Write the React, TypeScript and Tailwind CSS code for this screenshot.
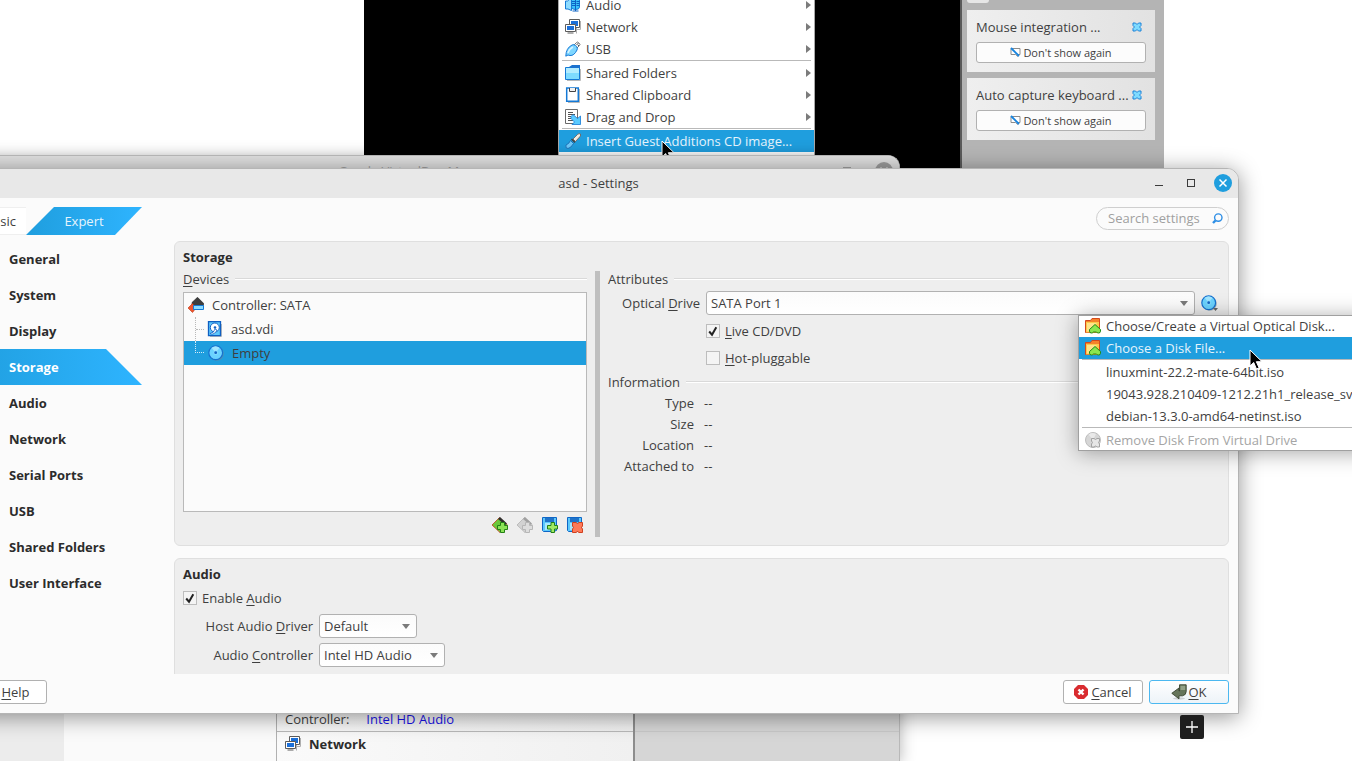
import type { ReactNode } from "react";
import { clsx } from "clsx";

const NAV_ITEMS = ["General", "System", "Display", "Storage", "Audio", "Network", "Serial Ports", "USB", "Shared Folders", "User Interface"];

const INFO_ROWS = ["Type", "Size", "Location", "Attached to"];

const NOTIFICATIONS = ["Mouse integration ...", "Auto capture keyboard ..."];

type IconProps = { children: ReactNode; className?: string };

function Icon({ children, className }: IconProps) {
    return (
        <svg viewBox="0 0 16 16" className={clsx("size-4 shrink-0", className)} aria-hidden="true">
            {children}
        </svg>
    );
}

function AudioIcon() {
    return (
        <Icon>
            <path d="M.5 4h2l4-3.500v13L3 12H.5z" fill="#8fdcff" stroke="#1479d6" />
            <path d="M6.500 3q0-2.500 4-2.500t4 2.500v7q0 2.500-4 2.500t-4-2.500z" fill="#3cc4fa" stroke="#1479d6" />
            <path d="M7 4.500h3M7 6.500h3M7 8.500h3M11.500 4.500h3M11.500 6.500h3M11.500 8.500h3M10.500 1v13M7.500 14h6" stroke="#0b62c4" fill="none" />
        </Icon>
    );
}

function NetworkIcon() {
    return (
        <Icon>
            <path d="M15.500 2v8.500H12M11.500 8v6.500" stroke="#b0b0b0" fill="none" />
            <path d="M4.500.500h10v8h-10z" fill="#fff" stroke="#5c5c5c" />
            <path d="M6 2h7v5H6z" fill="#1b6fd8" />
            <path d="M.500 5.500h10v7H.500z" fill="#fff" stroke="#5c5c5c" />
            <path d="M2 7h7v4H2z" fill="#1b6fd8" />
            <path d="M2.500 14h6" stroke="#5c5c5c" />
        </Icon>
    );
}

function UsbIcon() {
    return (
        <Icon>
            <path d="M9 4l2.500-2.500q1-1 2 0l1 1q1 1 0 2L12 7z" fill="#f4f4f4" stroke="#777" />
            <path d="M11.500 3.500h1M12.500 2.500h1M13 4.500h1" stroke="#555" />
            <path d="M.8 15.200Q1 7 7 4q2-1 3.500.5l1 1Q13 7 12 9q-3 6-7 5.500l-2-.5z" fill="#7ed6ff" stroke="#1479d6" />
            <path d="M3 12q1-4 5-6" stroke="#d5f3ff" fill="none" strokeWidth="1.500" />
        </Icon>
    );
}

function FolderIcon() {
    return (
        <Icon>
            <path d="M4 2l3-2h8v4H4z" fill="#1b72cf" />
            <path d="M15.500 4v11.500H2" stroke="#b9b9b9" fill="none" />
            <path d="M.500 2.500h14v12H.500z" fill="#7edbff" stroke="#1479d6" />
            <path d="M1 3h13v5H1z" fill="#b2ecff" />
            <path d="M8 0h7v3H6z" fill="#1b72cf" />
        </Icon>
    );
}

function ClipboardIcon() {
    return (
        <Icon>
            <path d="M14.500 2v13.500H3" stroke="#b9b9b9" fill="none" />
            <path d="M1.700 1h11.600v13.300H1.700z" fill="#fff" stroke="#1479d6" strokeWidth="1.500" />
            <path d="M4.500 1v3.500h6V1" fill="#f2f2f2" stroke="#444" />
        </Icon>
    );
}

function DragDropIcon() {
    return (
        <Icon>
            <path d="M.500.500h12v14H.500z" fill="#fff" stroke="#6a6a6a" />
            <path d="M3 3.500h5M3 5.500h7M3 7.500h3M3 9.500h3M3 11.500h5" stroke="#555" />
            <path d="M6 7.500l2-2 4.500 4 3-2.500v8.500H7l2.500-2.500L6 9.500z" fill="#5acbff" stroke="#1479d6" strokeWidth=".8" />
        </Icon>
    );
}

function ScrewdriverIcon() {
    return (
        <Icon>
            <path d="M8 6l4.500-4.500Q14 0 15.500 1v2L10.500 8.500z" fill="#f3ebe2" stroke="#6b5a52" strokeWidth=".8" />
            <path d="M6.500 6l3.500 3.500" stroke="#444" strokeWidth="1.500" />
            <path d="M1 12q3-1 4.500-4.500l3 3Q6 15 3 15.500q-3 0-2-3.500z" fill="#6ec9fa" stroke="#1464ad" strokeWidth=".8" />
        </Icon>
    );
}

function DiskFolderIcon() {
    return (
        <Icon>
            <path d="M.500 2.500h5l1.500-2h7.500v14H.500z" fill="#f5822a" stroke="#d4491c" />
            <path d="M1 4h13v10.500H1z" fill="#fbc94a" />
            <path d="M2 5h10L4 13.500H2z" fill="#ffe38a" />
            <path d="M10 6.500l5.500 5v1.700q0 1.800-2 1.800-1.500 0-2-1h-3q-.8 1-2 1-2 0-2-1.800v-1.700z" fill="#8be64f" stroke="#1f8a17" />
        </Icon>
    );
}

function RemoveDiskIcon() {
    return (
        <Icon>
            <circle cx="8" cy="8" r="7.500" fill="#d6d6d6" stroke="#bdbdbd" />
            <path d="M8 8L3.500 2.500Q7 0 11 2z" fill="#e9e9e9" />
            <path d="M6.500 6.500H9l1.500 1 1.500-1h2.500v2.500l-1 1.500 1 1.500V15H12l-1.500-1L9 15H6.500v-3l1-1.500-1-1.500z" fill="#e6e6e6" stroke="#a3a3a3" />
        </Icon>
    );
}

function ControllerIcon() {
    return (
        <Icon>
            <path d="M4 5.500L9.500.3l6 6v2.200H4z" fill="#3d3d3d" stroke="#222" strokeWidth=".6" />
            <path d="M0 11l4.500-4.500L8 11l-3.500 4.500z" fill="#f0542c" stroke="#b8320f" strokeWidth=".6" />
            <path d="M5.500 8.500h10v4h-10z" fill="#8ddcff" stroke="#1479d6" />
        </Icon>
    );
}

function HardDiskIcon() {
    return (
        <Icon>
            <path d="M14.500 3v12.500H3" stroke="#bdbdbd" fill="none" />
            <path d="M1.500.700h12v14h-12z" fill="#5cc6fb" stroke="#0f5fc2" strokeWidth="1.300" />
            <circle cx="7.800" cy="6.500" r="4.500" fill="#fff" stroke="#1262c6" />
            <path d="M8 8q-1 4-5 4.500 1 1 3 .5 3-1 4-4z" fill="#fff" stroke="#1262c6" strokeWidth=".8" />
            <circle cx="8" cy="6.500" r="1.300" fill="#1262c6" />
        </Icon>
    );
}

function DiscIcon() {
    return (
        <Icon>
            <circle cx="8.800" cy="8.800" r="7" fill="#6e8797" opacity=".6" />
            <circle cx="7.700" cy="7.700" r="6.900" fill="#6bd3ff" stroke="#1671cf" strokeWidth="1.200" />
            <path d="M7.700 7.700L3.500 2.800q4-3 8 0z" fill="#a3e6ff" />
            <circle cx="7.700" cy="7.700" r="2.300" fill="#86dcff" />
            <circle cx="7.700" cy="7.700" r="1.400" fill="#1564c4" />
        </Icon>
    );
}

function AddControllerIcon({ disabled }: { disabled?: boolean }) {
    return (
        <Icon className={clsx(disabled && "opacity-40 grayscale")}>
            <path d="M0 8l7.500-7.500L15.500 8 8 15.500z" fill="#6cc83a" stroke="#c7401c" strokeWidth=".8" />
            <path d="M6 2l2-2 7 6.500-2 1.500z" fill="#2e2e2e" />
            <path d="M8.500 5.500h4v3h3v4h-3v3h-4v-3h-3v-4h3z" fill="#8be356" stroke="#238016" />
        </Icon>
    );
}

function AttachmentIcon({ kind }: { kind: "add" | "remove" }) {
    return (
        <Icon>
            <path d="M.500.500h14v13h-1l-.5 1H1.500l-1-1z" fill="#5cc8fb" stroke="#0f66c6" />
            <path d="M3 1h9v4H3z" fill="#2073c9" />
            <path d="M3 6h9v7H3z" fill="#a9e8ff" />
            {kind === "add" ? (
                <path d="M9 5.500h3.500v3h3v3.500h-3v3.500H9V12H5.500V8.500H9z" fill="#a0ea62" stroke="#238016" />
            ) : (
                <path d="M5.500 5.500H9l1.500 1 1.500-1h3.500V9l-1 1.500 1 1.500v3.500H12l-1.500-1-1.500 1H5.500V12l1-1.500-1-1.500z" fill="#ff7a58" stroke="#d0401f" />
            )}
        </Icon>
    );
}

function Cursor({ className }: { className: string }) {
    return (
        <svg viewBox="0 0 14 21" className={clsx("pointer-events-none absolute h-[21px] w-[14px]", className)} aria-hidden="true">
            <path d="M1 1v16l3.700-3.500L7.500 20l2.600-1.200-2.800-6.100H13z" fill="#000" stroke="#fff" />
        </svg>
    );
}

type MenuItemProps = { icon?: ReactNode; label: string; submenu?: boolean; active?: boolean; disabled?: boolean };

function MenuItem({ icon, label, submenu, active, disabled }: MenuItemProps) {
    return (
        <li>
            <button
                type="button"
                disabled={disabled}
                className={clsx(
                    "flex h-[22px] w-full items-center gap-[5px] pr-1 pl-[7px] text-left whitespace-nowrap",
                    active && "bg-[#1f9ede] text-[#e6f4fc]",
                    disabled && "text-[#a5a5a5]"
                )}
            >
                <span className="size-4 shrink-0">{icon}</span>
                <span className="flex-1">{label}</span>
                {submenu && (
                    <svg viewBox="0 0 5 8" className="h-2 w-[5px]" aria-hidden="true">
                        <path d="M0 0l5 4-5 4z" fill="#7b7b7b" />
                    </svg>
                )}
            </button>
        </li>
    );
}

function MenuSeparator() {
    return <li role="separator" className="mx-1 h-0.5 border-t border-[#b9b9b9]" />;
}

function Caret() {
    return (
        <svg viewBox="0 0 8 5" className="pointer-events-none mr-[7px] h-[5px] w-2 self-center justify-self-end [grid-area:1/1]" aria-hidden="true">
            <path d="M0 0h8L4 5z" fill="#7b7b7b" />
        </svg>
    );
}

function Dropdown({ id, value, className }: { id: string; value: string; className?: string }) {
    return (
        <div className={clsx("grid", className)}>
            <select
                id={id}
                className="h-6 w-full appearance-none rounded-[3px] border border-[#b1b1b1] bg-linear-to-b from-[#fbfbfb] to-white pr-5 pl-1 [grid-area:1/1]"
            >
                <option>{value}</option>
            </select>
            <Caret />
        </div>
    );
}

function Checkbox({ children, checked }: { children: ReactNode; checked?: boolean }) {
    return (
        <label className="flex items-center gap-[5px]">
            <span className="grid">
                <input type="checkbox" defaultChecked={checked} className="peer size-3.5 appearance-none border border-[#bdbdbd] bg-[#f4f4f4] [grid-area:1/1]" />
                <svg viewBox="0 0 14 14" className="pointer-events-none hidden size-3.5 [grid-area:1/1] peer-checked:block" aria-hidden="true">
                    <path d="M3.200 7.500l2.800 3.200 4.300-7.500" fill="none" stroke="#222" strokeWidth="2" />
                </svg>
            </span>
            <span>{children}</span>
        </label>
    );
}

function Mnemonic({ children }: { children: string }) {
    return <span className="underline underline-offset-2">{children}</span>;
}

function GroupTitle({ children }: { children: ReactNode }) {
    return (
        <div className="flex h-4 items-center gap-1.5">
            <h3>{children}</h3>
            <div className="h-0.5 flex-1 border-t border-b border-t-[#d9d9d9] border-b-white" />
        </div>
    );
}

function DeviceMenu() {
    return (
        <ul className="absolute -top-1.5 left-[194px] h-[170px] w-[257px] bg-white outline-1 -outline-offset-1 outline-[#a9a9a9]">
            <MenuItem icon={<AudioIcon />} label="Audio" submenu />
            <MenuItem icon={<NetworkIcon />} label="Network" submenu />
            <MenuItem icon={<UsbIcon />} label="USB" submenu />
            <MenuSeparator />
            <MenuItem icon={<FolderIcon />} label="Shared Folders" submenu />
            <MenuItem icon={<ClipboardIcon />} label="Shared Clipboard" submenu />
            <MenuItem icon={<DragDropIcon />} label="Drag and Drop" submenu />
            <MenuSeparator />
            <MenuItem icon={<ScrewdriverIcon />} label="Insert Guest Additions CD image..." active />
        </ul>
    );
}

function Notification({ title }: { title: string }) {
    return (
        <li className="flex h-[62px] flex-col gap-[5px] bg-linear-to-r from-[#efefef] to-[#e2e2e2] px-[9px] pt-[7px]">
            <div className="flex h-5 items-center justify-between pr-1">
                <span>{title}</span>
                <button type="button" aria-label="Close">
                    <svg viewBox="0 0 10 10" className="size-2.5" aria-hidden="true">
                        <path d="M1 1h2.500L5 2.500 6.500 1H9v2.500L7.500 5 9 6.500V9H6.500L5 7.500 3.500 9H1V6.500L2.500 5 1 3.500z" fill="#7edbff" stroke="#1d82d8" />
                    </svg>
                </button>
            </div>
            <button type="button" className="flex h-[21px] items-center justify-center gap-0.5 rounded-[3px] border border-[#b1b1b1] bg-[#fcfcfc] text-[11px]">
                <svg viewBox="0 0 11 11" className="size-[11px]" aria-hidden="true">
                    <path d="M1 1.500h9v6H8v2L5.500 7.500H1z" fill="#fff" stroke="#8b8b8b" />
                    <path d="M1 1l8 8" stroke="#1684e0" strokeWidth="1.800" />
                </svg>
                Don't show again
            </button>
        </li>
    );
}

function MachineWindow() {
    return (
        <section aria-label="Virtual machine" className="absolute top-0 right-[188px] left-[364px] flex h-[400px] bg-black">
            <div className="flex-1" />
            <aside className="w-[204px] border-l-2 border-[#5a5a5a] bg-[#b4b4b4] pr-[9px] pl-[5px]">
                <div className="mb-[7px] h-[3px] w-[22px] rounded-b-sm bg-[#e6e6e6]" />
                <ul className="flex flex-col gap-1.5">
                    {NOTIFICATIONS.map((title) => (
                        <Notification key={title} title={title} />
                    ))}
                </ul>
            </aside>
            <DeviceMenu />
            <Cursor className="top-[140px] left-[297px]" />
        </section>
    );
}

function ManagerWindow() {
    return (
        <section
            aria-label="Manager"
            className="absolute top-[155px] right-[452px] bottom-0 -left-[70px] flex flex-col overflow-hidden rounded-t-xl border border-b-0 border-[#b9b9b9] bg-[#fafafa] shadow-[0_2px_16px_rgba(0,0,0,0.3)]"
        >
            <header className="flex h-[30px] items-center bg-[#dedede] px-1.5 text-[#a0a0a0]">
                <h2 className="flex-1 pl-[60px] text-center">Oracle VirtualBox Manager</h2>
                <div className="flex w-[50px] items-center justify-between">
                    <span className="size-2 border border-current" />
                    <svg viewBox="0 0 18 18" className="size-[18px]" aria-hidden="true">
                        <circle cx="9" cy="9" r="9" fill="#9b9b9b" />
                        <path d="M5.500 5.500l7 7M12.500 5.500l-7 7" stroke="#dedede" strokeWidth="1.500" />
                    </svg>
                </div>
            </header>
            <div className="flex flex-1">
                <div className="w-[133px] bg-[#ececec]" />
                <div className="w-[212px]" />
                <div className="flex w-[359px] flex-col justify-end border-r-2 border-l border-r-[#8d8d8d] border-l-[#b1b1b1] bg-linear-to-r from-[#fafafa] to-[#f0f0f0]">
                    <div className="flex h-[26px] items-center gap-[17px] border-b border-[#b9b9b9] pl-2">
                        <span>Controller:</span>
                        <a href="#audio" className="text-[#1a12e8]">Intel HD Audio</a>
                    </div>
                    <div className="flex h-[29px] items-start gap-2 pt-1 pl-2">
                        <NetworkIcon />
                        <h3 className="leading-4 font-bold text-[#2c2c2c]">Network</h3>
                    </div>
                </div>
                <div className="flex flex-1 flex-col justify-end bg-[#d6d6d6]">
                    <div className="h-[30px] border-t border-[#c9c9c9]" />
                </div>
            </div>
        </section>
    );
}

function TitleBar() {
    return (
        <header className="flex h-[29px] shrink-0 items-center bg-[#e8e8e8] pr-1.5 pb-px">
            <h1 className="flex-1 pl-[84px] text-center">asd - Settings</h1>
            <div className="flex items-center gap-[19px] text-[#3b3b3b]">
                <button type="button" aria-label="Minimize" className="flex h-1.5 w-[13px] items-end">
                    <span className="h-px w-2 bg-current" />
                </button>
                <button type="button" aria-label="Maximize" className="size-2 border border-current" />
                <button type="button" aria-label="Close">
                    <svg viewBox="0 0 18 18" className="size-[18px]" aria-hidden="true">
                        <circle cx="9" cy="9" r="9" fill="#1f9ede" />
                        <path d="M5.500 5.500l7 7M12.500 5.500l-7 7" stroke="#fff" strokeWidth="1.500" />
                    </svg>
                </button>
            </div>
        </header>
    );
}

function ModeBar() {
    return (
        <div className="flex h-7 shrink-0 items-start justify-between">
            <div className="flex h-7 items-center">
                <button type="button" className="h-7 w-[68px] border-y border-[#efefef] bg-white pr-[10px] text-right">Basic</button>
                <button
                    type="button"
                    className="h-7 w-[116px] bg-linear-to-r from-[#1f9ede] to-[#2eb4ff] text-[#e6f4fc] [clip-path:polygon(28px_0,100%_0,89px_100%,0_100%)]"
                >
                    Expert
                </button>
            </div>
            <label className="flex h-[23px] w-[133px] items-center rounded-full border border-[#cfcfcf] pr-[5px] pl-[11px]">
                <input type="text" placeholder="Search settings" aria-label="Search settings" className="h-5 min-w-0 flex-1 bg-transparent pb-px outline-none placeholder:text-[#a0a0a0]" />
                <svg viewBox="0 0 11 11" className="size-[11px]" aria-hidden="true">
                    <circle cx="6.300" cy="4.600" r="3.700" fill="none" stroke="#2f8fe6" strokeWidth="1.400" />
                    <path d="M3.500 7.500L1 10" stroke="#2f8fe6" strokeWidth="2.400" />
                </svg>
            </label>
        </div>
    );
}

function CategoryNav() {
    return (
        <nav className="w-[184px] shrink-0">
            <ul className="font-bold text-[#2c2c2c]">
                {NAV_ITEMS.map((item) => (
                    <li key={item}>
                        <a
                            href="#settings"
                            className={clsx(
                                "flex h-9 items-center pl-[51px]",
                                item === "Storage" &&
                                    "bg-linear-to-r from-[#1f9ede] to-[#2eb4ff] text-white [clip-path:polygon(0_0,148px_0,100%_100%,0_100%)]"
                            )}
                        >
                            {item}
                        </a>
                    </li>
                ))}
            </ul>
        </nav>
    );
}

function StorageTree() {
    return (
        <div className="flex w-[404px] shrink-0 flex-col">
            <GroupTitle>
                <Mnemonic>D</Mnemonic>evices
            </GroupTitle>
            <ul className="mt-[5px] h-[220px] border border-[#b9b9b9] bg-[#fbfbfb]">
                <li className="flex h-6 items-center gap-2 pl-1">
                    <ControllerIcon />
                    Controller: SATA
                </li>
                <li className="flex h-6 items-center pl-[11px]">
                    <span className="h-6 w-px border-l border-dotted border-[#b9b9b9]" />
                    <span className="mr-[3px] w-2 border-t border-dotted border-[#b9b9b9]" />
                    <HardDiskIcon />
                    <span className="ml-2">asd.vdi</span>
                </li>
                <li className="flex h-6 items-center bg-[#1f9ede] pl-[11px]">
                    <span className="h-3 w-[9px] self-start border-b border-l border-dotted border-[#d5ecf8]" />
                    <span className="w-1" />
                    <DiscIcon />
                    <span className="ml-2">Empty</span>
                </li>
            </ul>
            <div className="flex justify-end gap-[9px] pt-[5px] pr-1">
                <button type="button" aria-label="Add controller"><AddControllerIcon /></button>
                <button type="button" aria-label="Remove controller" disabled><AddControllerIcon disabled /></button>
                <button type="button" aria-label="Add attachment"><AttachmentIcon kind="add" /></button>
                <button type="button" aria-label="Remove attachment"><AttachmentIcon kind="remove" /></button>
            </div>
        </div>
    );
}

function StorageAttributes() {
    return (
        <div className="flex-1">
            <GroupTitle>Attributes</GroupTitle>
            <div className="mt-1 flex items-center">
                <label htmlFor="optical" className="mr-1.5 w-[92px] text-right">
                    Optical <Mnemonic>D</Mnemonic>rive
                </label>
                <Dropdown id="optical" value="SATA Port 1" className="flex-1" />
                <button type="button" aria-label="Choose disk" className="mr-0.5 ml-1.5 flex items-end">
                    <DiscIcon />
                    <svg viewBox="0 0 5 3" className="-ml-1 h-[3px] w-[5px]" aria-hidden="true">
                        <path d="M0 0h5L2.500 3z" fill="#666" />
                    </svg>
                </button>
            </div>
            <div className="flex flex-col gap-[7px] pt-1.5 pl-[98px]">
                <Checkbox checked>
                    <Mnemonic>L</Mnemonic>ive CD/DVD
                </Checkbox>
                <Checkbox>
                    <Mnemonic>H</Mnemonic>ot-pluggable
                </Checkbox>
            </div>
            <div className="mt-1.5">
                <GroupTitle>Information</GroupTitle>
            </div>
            <dl className="mt-0.5">
                {INFO_ROWS.map((label) => (
                    <div key={label} className="flex h-[21px] items-center">
                        <dt className="mr-2.5 w-[86px] text-right">{label}</dt>
                        <dd>--</dd>
                    </div>
                ))}
            </dl>
        </div>
    );
}

function StorageCard() {
    return (
        <section className="shrink-0 rounded-md border border-[#dfdfdf] bg-[#eee] px-2 pt-[7px] pb-2">
            <h2 className="mb-0.5 h-5 leading-4 font-bold text-[#2c2c2c]">Storage</h2>
            <div className="flex">
                <StorageTree />
                <div className="mr-2 ml-2 h-[266px] w-[5px] bg-[#bfbfbf]" />
                <StorageAttributes />
            </div>
        </section>
    );
}

function AudioCard() {
    return (
        <section className="shrink-0 rounded-md border border-[#dfdfdf] bg-[#eee] px-2 pt-[7px] pb-8">
            <h2 className="mb-1.5 h-4 leading-4 font-bold text-[#2c2c2c]">Audio</h2>
            <Checkbox checked>
                Enable <Mnemonic>A</Mnemonic>udio
            </Checkbox>
            <div className="mt-1.5 flex items-center gap-1.5">
                <label htmlFor="driver" className="w-[130px] text-right">
                    Host Audio <Mnemonic>D</Mnemonic>river
                </label>
                <Dropdown id="driver" value="Default" className="w-[98px]" />
            </div>
            <div className="mt-[5px] flex items-center gap-1.5">
                <label htmlFor="controller" className="w-[130px] text-right">
                    Audio <Mnemonic>C</Mnemonic>ontroller
                </label>
                <Dropdown id="controller" value="Intel HD Audio" className="w-[126px]" />
            </div>
        </section>
    );
}

function DialogButtons() {
    return (
        <footer className="flex shrink-0 items-center gap-1.5 pt-1.5 pr-[9px] pb-[9px]">
            <button type="button" className="mr-auto h-6 w-[89px] rounded-[3px] border border-[#b1b1b1] bg-white pl-[26px]">
                <Mnemonic>H</Mnemonic>elp
            </button>
            <button type="button" className="flex h-6 w-20 items-center justify-center gap-[3px] rounded-[3px] border border-[#b1b1b1] bg-white">
                <svg viewBox="0 0 14 14" className="size-3.5" aria-hidden="true">
                    <path d="M4 0h6l4 4v6l-4 4H4l-4-4V4z" fill="#d92c30" />
                    <path d="M4.500 4.500l5 5M9.500 4.500l-5 5" stroke="#fff" strokeWidth="2.400" />
                </svg>
                <span>
                    <Mnemonic>C</Mnemonic>ancel
                </span>
            </button>
            <button type="button" className="flex h-6 w-20 items-center justify-center gap-px rounded-[3px] border border-[#4cb8f0] bg-linear-to-b from-white to-[#edf3f8]">
                <Icon>
                    <ellipse cx="8" cy="14.500" rx="6" ry="1.200" fill="#000" opacity=".15" />
                    <path d="M8.500.800h6.700v6.700q0 3.500-3.700 4.300H8v3L.8 9.300 8 4v3h.500z" fill="#66755b" stroke="#38432f" strokeWidth=".9" />
                    <path d="M9.500 1.800h4.700V6H9.500z" fill="#93a187" />
                </Icon>
                <span>
                    <Mnemonic>O</Mnemonic>K
                </span>
            </button>
        </footer>
    );
}

function SettingsDialog() {
    return (
        <section
            aria-label="Settings"
            className="absolute top-[168px] right-[113px] bottom-[47px] -left-[43px] flex flex-col overflow-hidden rounded-t-xl border border-[#b5b5b5] bg-[#fbfbfb] shadow-[0_3px_22px_rgba(0,0,0,0.42)]"
        >
            <TitleBar />
            <div className="flex min-h-0 flex-1 flex-col gap-1.5 pt-[9px] pr-[9px]">
                <ModeBar />
                <div className="flex min-h-0 flex-1">
                    <CategoryNav />
                    <main className="ml-8 flex min-w-0 flex-1 flex-col gap-3 overflow-hidden">
                        <StorageCard />
                        <AudioCard />
                    </main>
                </div>
            </div>
            <DialogButtons />
        </section>
    );
}

function DiskMenu() {
    return (
        <ul className="absolute top-[315px] left-[1078px] w-[330px] bg-white shadow-[0_2px_20px_rgba(0,0,0,0.35)] outline-1 -outline-offset-1 outline-[#a0a0a0]">
            <MenuItem icon={<DiskFolderIcon />} label="Choose/Create a Virtual Optical Disk..." />
            <MenuItem icon={<DiskFolderIcon />} label="Choose a Disk File..." active />
            <MenuSeparator />
            <MenuItem label="linuxmint-22.2-mate-64bit.iso" />
            <MenuItem label="19043.928.210409-1212.21h1_release_svc_refresh.iso" />
            <MenuItem label="debian-13.3.0-amd64-netinst.iso" />
            <MenuSeparator />
            <MenuItem icon={<RemoveDiskIcon />} label="Remove Disk From Virtual Drive" disabled />
        </ul>
    );
}

export default function App() {
    return (
        <div className="relative h-screen w-full overflow-hidden bg-white font-['Open_Sans','Noto_Sans',sans-serif] text-[13px] leading-5 text-[#3f3f3f]">
            <MachineWindow />
            <ManagerWindow />
            <SettingsDialog />
            <button type="button" aria-label="Add" className="absolute top-[715px] left-[1180px] flex size-6 items-center justify-center rounded-xs bg-[#1e1e1e]">
                <svg viewBox="0 0 12 12" className="size-3" aria-hidden="true">
                    <path d="M6 0v12M0 6h12" stroke="#fff" strokeWidth="1.300" />
                </svg>
            </button>
            <DiskMenu />
            <Cursor className="top-[349px] left-[1249px]" />
        </div>
    );
}
